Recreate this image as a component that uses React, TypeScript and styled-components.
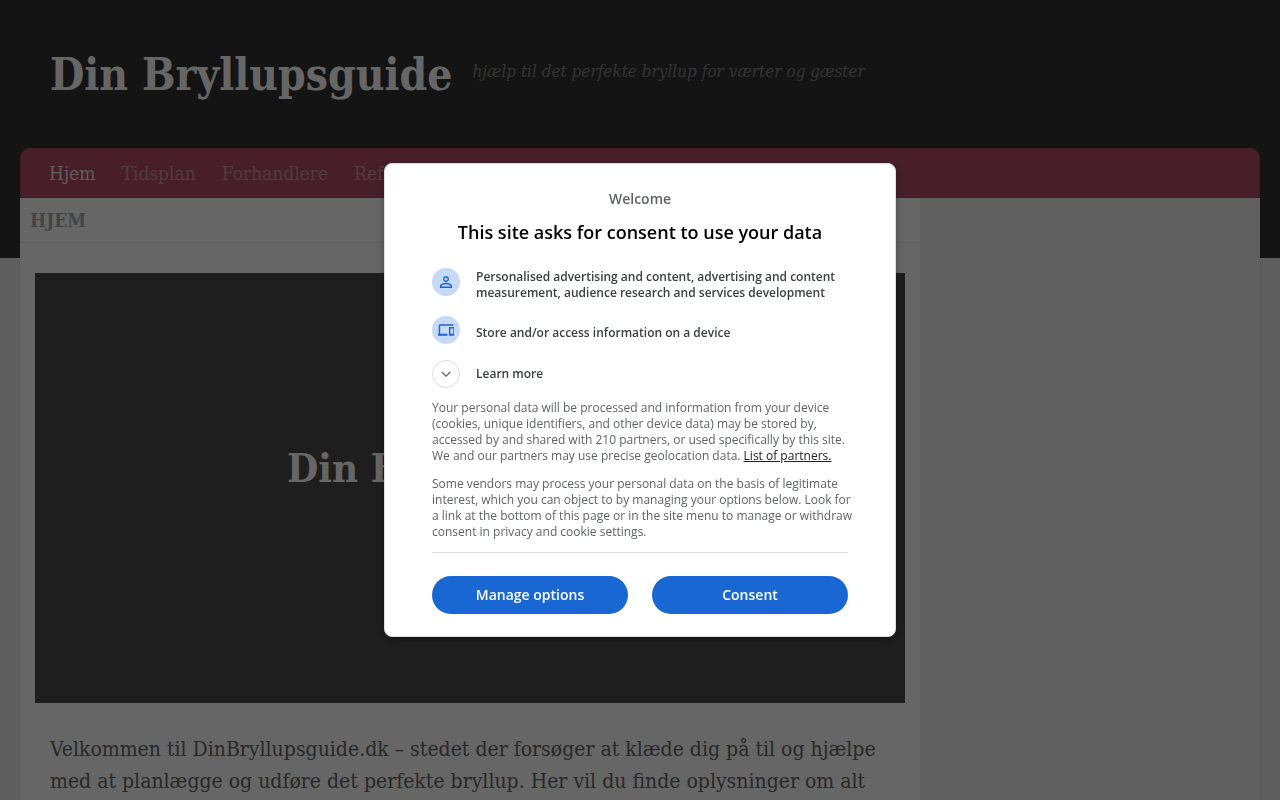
import React from "react";
import styled, { createGlobalStyle } from "styled-components";

const GlobalStyle = createGlobalStyle`
  * { box-sizing: border-box; }
  body {
    margin: 0;
    background: #eaeaea;
    color: #555;
    font-family: "Roboto Slab", "DejaVu Serif Condensed", "DejaVu Serif", serif;
    overflow: hidden;
  }
  h1, h2, p, ul { margin: 0; padding: 0; }
  ul { list-style: none; }
`;

const Page = styled.div`
  min-height: 100vh;
  display: flex;
  flex-direction: column;
`;

const Header = styled.header`
  height: 258px;
  padding: 0 20px;
  background: #333;
`;

const Branding = styled.div`
  display: flex;
  align-items: center;
  height: 148px;
  padding: 2px 30px 0;
  gap: 20px;
`;

const SiteTitle = styled.h1`
  font-size: 44px;
  line-height: 60px;
  font-weight: 700;
  white-space: nowrap;
  a { color: #fff; text-decoration: none; }
`;

const Tagline = styled.p`
  padding-bottom: 8px;
  font-size: 17px;
  line-height: 24px;
  font-weight: 300;
  font-style: italic;
  color: rgba(255, 255, 255, 0.4);
  white-space: nowrap;
`;

const Nav = styled.nav`
  height: 50px;
  padding: 0 16px;
  background: #b34c6c;
  border-radius: 10px 10px 0 0;
  box-shadow: inset 0 0 0 1px rgba(0, 0, 0, 0.08);
  ul { display: flex; }
`;

const NavLink = styled.a<{ $current?: boolean }>`
  display: block;
  padding: 0 13px;
  font-size: 19px;
  line-height: 50px;
  font-weight: 300;
  text-decoration: none;
  color: ${(p) => (p.$current ? "rgba(255, 255, 255, 0.85)" : "rgba(255, 255, 255, 0.4)")};
`;

const Container = styled.div`
  flex: 1;
  display: flex;
  margin: -60px 20px 0;
  background: #f0f0f0;
  box-shadow: 0 0 1px rgba(0, 0, 0, 0.15);
`;

const Main = styled.main`
  flex: 1;
  background: #fff;
`;

const Sidebar = styled.aside`
  width: 340px;
  background: #f0f0f0;
`;

const PageTitle = styled.h2`
  padding: 0 10px;
  border-bottom: 1px solid #eee;
  font-size: 19px;
  line-height: 44px;
  font-weight: 700;
  text-transform: uppercase;
  color: #aaa;
`;

const Banner = styled.section`
  display: flex;
  align-items: center;
  justify-content: center;
  height: 430px;
  margin: 30px 15px;
  padding-bottom: 40px;
  background: #4b4b4b;
  color: #fff;
  font-size: 40px;
  line-height: 56px;
  font-weight: 700;
`;

const Intro = styled.p`
  padding: 0 30px;
  font-size: 21px;
  line-height: 32px;
  font-weight: 300;
  color: #666;
`;

const Overlay = styled.div`
  position: fixed;
  inset: 0;
  display: flex;
  align-items: center;
  justify-content: center;
  background: rgba(0, 0, 0, 0.6);
`;

const Dialog = styled.section`
  width: 512px;
  padding: 25px 47px 22px;
  border: 1px solid #dadce0;
  border-radius: 8px;
  background: #fff;
  box-shadow: 0 2px 8px rgba(0, 0, 0, 0.3);
  color: #5f6368;
  font-family: "Open Sans", sans-serif;
  font-size: 12px;
  line-height: 16px;
`;

const Welcome = styled.p`
  font-size: 14px;
  line-height: 20px;
  font-weight: 600;
  text-align: center;
`;

const DialogTitle = styled.h2`
  margin: 11px 0 24px;
  font-size: 18px;
  line-height: 24px;
  font-weight: 600;
  text-align: center;
  color: #000;
`;

const Purposes = styled.ul`
  display: flex;
  flex-direction: column;
  gap: 14px;
  margin-bottom: 10px;
`;

const PurposeRow = styled.li`
  display: flex;
  align-items: flex-start;
  gap: 16px;
  min-height: 34px;
  color: #3c4043;
  font-weight: 600;
`;

const PurposeText = styled.span`
  align-self: center;
`;

const PurposeIcon = styled.span`
  display: grid;
  place-items: center;
  flex: none;
  width: 28px;
  height: 28px;
  border-radius: 50%;
  background: #c6daf5;
  color: #1967d2;
`;

const LearnMore = styled.button`
  display: flex;
  align-items: center;
  gap: 16px;
  height: 28px;
  padding: 0;
  border: 0;
  background: none;
  color: #3c4043;
  font: inherit;
  font-weight: 600;
`;

const Chevron = styled.span`
  display: grid;
  place-items: center;
  width: 28px;
  height: 28px;
  border: 1px solid #dadce0;
  border-radius: 50%;
  color: #5f6368;
`;

const Details = styled.div`
  display: flex;
  flex-direction: column;
  gap: 12px;
  margin-right: -6px;
  padding: 12px 0;
  a { color: #202124; }
`;

const Actions = styled.div`
  display: grid;
  grid-template-columns: 1fr 1fr;
  gap: 24px;
  padding-top: 23px;
  border-top: 1px solid #dadce0;
`;

const ActionButton = styled.button`
  height: 38px;
  border: 0;
  border-radius: 19px;
  background: #1967d2;
  color: #fff;
  font: 600 14px/20px "Open Sans", sans-serif;
`;

const navItems = ["Hjem", "Tidsplan", "Forhandlere", "Referencer"];

export default function App() {
  return (
    <>
      <GlobalStyle />
      <Page>
        <Header>
          <Branding>
            <SiteTitle><a href="#hjem">Din Bryllupsguide</a></SiteTitle>
            <Tagline>hjælp til det perfekte bryllup for værter og gæster</Tagline>
          </Branding>
          <Nav>
            <ul>
              {navItems.map((item, i) => (
                <li key={item}><NavLink href={`#${item.toLowerCase()}`} $current={i === 0}>{item}</NavLink></li>
              ))}
            </ul>
          </Nav>
        </Header>
        <Container>
          <Main>
            <PageTitle>Hjem</PageTitle>
            <Banner>Din Bryllupsguide</Banner>
            <Intro>
              Velkommen til DinBryllupsguide.dk – stedet der forsøger at klæde dig på til og hjælpe med at planlægge og udføre det perfekte bryllup. Her vil du finde oplysninger om alt
            </Intro>
          </Main>
          <Sidebar />
        </Container>
      </Page>
      <Overlay>
        <Dialog role="dialog" aria-modal="true" aria-labelledby="consent-title">
          <Welcome>Welcome</Welcome>
          <DialogTitle id="consent-title">This site asks for consent to use your data</DialogTitle>
          <Purposes>
            <PurposeRow>
              <PurposeIcon>
                <svg width="18" height="18" viewBox="0 0 24 24" fill="currentColor" aria-hidden="true">
                  <path d="M12 5.9a2.1 2.1 0 1 1 0 4.2 2.1 2.1 0 0 1 0-4.2m0 9c2.97 0 6.1 1.46 6.1 2.1v1.1H5.9V17c0-.64 3.13-2.1 6.1-2.1M12 4C9.79 4 8 5.79 8 8s1.79 4 4 4 4-1.79 4-4-1.79-4-4-4zm0 9c-2.67 0-8 1.34-8 4v3h16v-3c0-2.66-5.33-4-8-4z" />
                </svg>
              </PurposeIcon>
              <PurposeText>Personalised advertising and content, advertising and content measurement, audience research and services development</PurposeText>
            </PurposeRow>
            <PurposeRow>
              <PurposeIcon>
                <svg width="16" height="18" viewBox="1 0 22 24" fill="currentColor" aria-hidden="true">
                  <path d="M4 6h18V4H4c-1.1 0-2 .9-2 2v11H0v3h14v-3H4V6zm19 2h-6c-.55 0-1 .45-1 1v10c0 .55.45 1 1 1h6c.55 0 1-.45 1-1V9c0-.55-.45-1-1-1zm-1 9h-4v-7h4v7z" />
                </svg>
              </PurposeIcon>
              <PurposeText>Store and/or access information on a device</PurposeText>
            </PurposeRow>
          </Purposes>
          <LearnMore type="button" aria-expanded="false">
            <Chevron>
              <svg width="18" height="18" viewBox="0 0 18 18" fill="none" stroke="currentColor" strokeWidth="1.3" aria-hidden="true">
                <path d="m4.8 7 4.2 4.2L13.2 7" />
              </svg>
            </Chevron>
            Learn more
          </LearnMore>
          <Details>
            <p>
              Your personal data will be processed and information from your device (cookies, unique identifiers, and other device data) may be stored by, accessed by and shared with 210 partners, or used specifically by this site. We and our partners may use precise geolocation data. <a href="#partners">List of partners.</a>
            </p>
            <p>
              Some vendors may process your personal data on the basis of legitimate interest, which you can object to by managing your options below. Look for a link at the bottom of this page or in the site menu to manage or withdraw consent in privacy and cookie settings.
            </p>
          </Details>
          <Actions>
            <ActionButton type="button">Manage options</ActionButton>
            <ActionButton type="button">Consent</ActionButton>
          </Actions>
        </Dialog>
      </Overlay>
    </>
  );
}
